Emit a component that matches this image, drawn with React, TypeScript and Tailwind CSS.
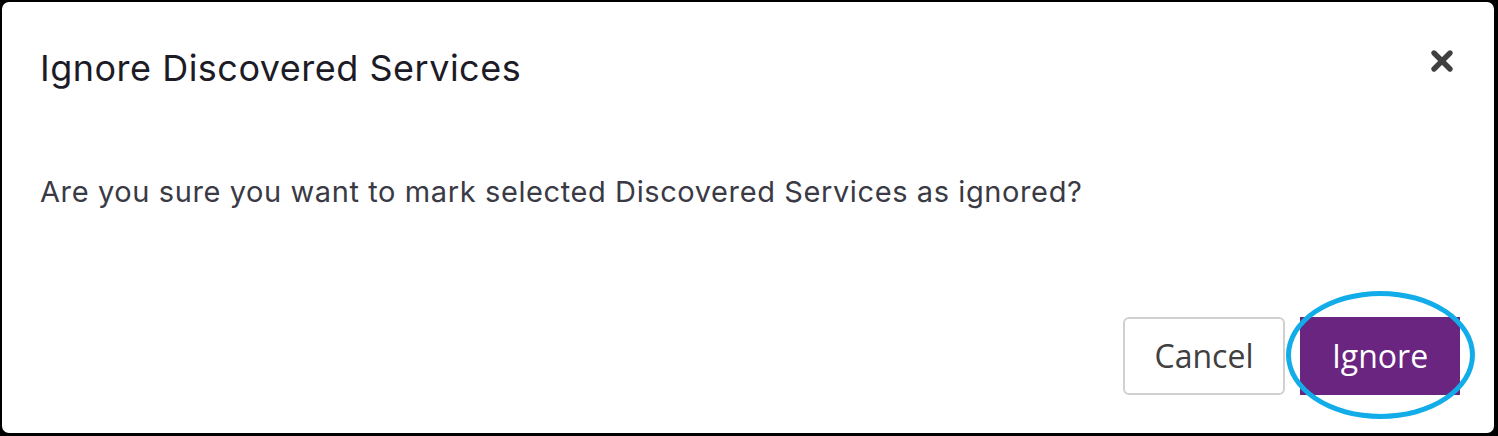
import { X } from "lucide-react";

export default function App() {
  return (
    <div className="h-[436px] w-[1498px] bg-black pb-[3px] pl-[2px] pr-[4px] pt-[2px]">
      <div className="flex h-full flex-col rounded-[7px] bg-white">
        <div className="flex items-start justify-between pl-[38px] pr-[36px] pt-[44px]">
          <h2 className="font-['Inter',sans-serif] text-[36px] leading-[44px] tracking-[0.5px] text-[#1c1b26]">
            Ignore Discovered Services
          </h2>
          <button className="mt-[-1px] text-[#404040]" aria-label="Close">
            <X size={32} strokeWidth={4} />
          </button>
        </div>

        <p className="mt-[84px] pl-[38px] font-['Inter',sans-serif] text-[29px] leading-[36px] tracking-[0.6px] text-[#3a3a45]">
          Are you sure you want to mark selected Discovered Services as ignored?
        </p>

        <div className="mt-auto flex justify-end gap-[15px] pb-[38px] pr-[34px]">
          <button className="h-[78px] w-[162px] rounded-[6px] border-2 border-[#d0d0d0] bg-white font-['Open_Sans',sans-serif] text-[32px] text-[#404040]">
            Cancel
          </button>
          <div className="relative">
            <button className="h-[78px] w-[160px] bg-[#6a2580] font-['Open_Sans',sans-serif] text-[32px] text-white">
              Ignore
            </button>
            <div className="pointer-events-none absolute left-[-14px] top-[-26px] h-[128px] w-[189px] rounded-[50%] border-[5px] border-[#12ade8]" />
          </div>
        </div>
      </div>
    </div>
  );
}
